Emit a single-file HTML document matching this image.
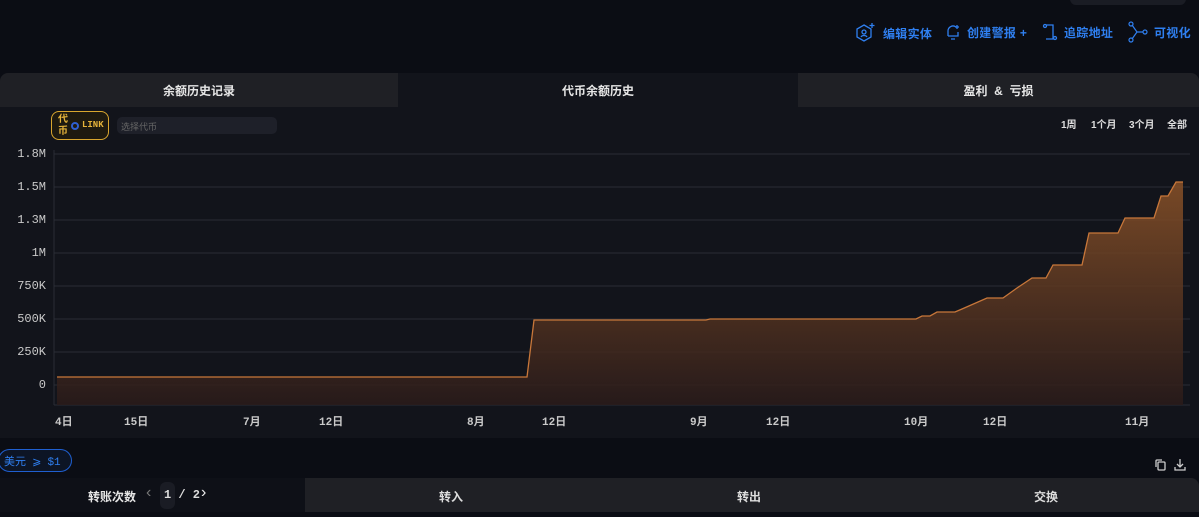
<!DOCTYPE html>
<html><head><meta charset="utf-8"><style>
*{margin:0;padding:0;box-sizing:border-box}
body{width:1199px;height:517px;background:#0b0d14;font-family:"Liberation Sans","Noto Sans CJK SC",sans-serif;overflow:hidden;position:relative;color:#ddd}
.abs{position:absolute}
.act{color:#2f7ff0;font-size:12px;font-weight:bold;display:flex;align-items:center;gap:6px;letter-spacing:0.3px}
.tab{position:absolute;top:73px;height:34px;font-size:12px;font-weight:bold;color:#e6e6e6;display:flex;align-items:center;justify-content:center}
.mono{font-family:"Liberation Mono","Noto Sans CJK SC",monospace}
.yl{position:absolute;right:1153px;font-size:12px;color:#c9c9c9;font-family:"Liberation Mono",monospace}
.xl{position:absolute;top:413px;font-size:11px;color:#c9c9c9;font-weight:bold;font-family:"Liberation Mono","Noto Sans CJK SC",monospace}
.rg{position:absolute;top:116px;font-size:10px;color:#ddd;font-weight:bold}
</style></head><body>
<div class="abs" style="left:1070px;top:-10px;width:116px;height:15px;border-radius:6px;background:#1a1c24"></div>
<div class="abs act" style="left:855px;top:22px">
<svg width="22" height="22" viewBox="0 0 22 22" fill="none" stroke="#2f7ff0" stroke-width="1.3"><path d="M9 3l7 4v8l-7 4-7-4V7z"/><circle cx="9" cy="10" r="2"/><path d="M6 15c1-2 5-2 6 0"/><path d="M17 1v5M14.5 3.5h5"/></svg>编辑实体</div>
<div class="abs act" style="left:945px;top:23px">
<svg width="16" height="18" viewBox="0 0 16 18" fill="none" stroke="#2f7ff0" stroke-width="1.3"><path d="M3 13V8a5 5 0 0 1 8-4M3 13h10v-4"/><path d="M6 16h4M12 2v4M10 4h4"/></svg>创建警报 +</div>
<div class="abs act" style="left:1042px;top:23px">
<svg width="16" height="18" viewBox="0 0 16 18" fill="none" stroke="#2f7ff0" stroke-width="1.3"><path d="M4 2h7v14H4"/><circle cx="3" cy="3" r="1.5"/><circle cx="13" cy="15" r="1.5"/></svg>追踪地址</div>
<div class="abs act" style="left:1128px;top:21px">
<svg width="20" height="22" viewBox="0 0 20 22" fill="none" stroke="#2f7ff0" stroke-width="1.2"><circle cx="3" cy="3" r="2"/><circle cx="3" cy="19" r="2"/><circle cx="17" cy="11" r="2"/><path d="M4 4l5 7-5 7M9 11h6"/></svg>可视化</div>

<div class="tab" style="left:0;width:398px;background:#1f2025;border-radius:8px 0 0 0">余额历史记录</div>
<div class="tab" style="left:398px;width:400px;background:#12141b">代币余额历史</div>
<div class="tab" style="left:798px;width:401px;background:#1f2025;border-radius:0 8px 0 0">盈利 &nbsp;&amp;&nbsp; 亏损</div>

<div class="abs" style="left:0;top:107px;width:1199px;height:331px;background:#12141b"></div>
<div class="abs" style="left:51px;top:111px;width:58px;height:29px;border:1.5px solid #d9a62e;border-radius:8px;background:#1e1a10;font-size:10px;color:#e5b33a;font-weight:bold">
<div class="abs" style="left:6px;top:2px;line-height:12px">代<br>币</div>
<div class="abs" style="left:19px;top:10px;width:8px;height:8px;border:2px solid #2f5fd0;border-radius:50%"></div>
<div class="abs mono" style="left:30px;top:8px;font-size:9px">LINK</div></div>
<div class="abs" style="left:117px;top:117px;width:160px;height:17px;border-radius:5px;background:#1e2029;font-size:9px;color:#666;padding:3px 4px">选择代币</div>
<div class="rg" style="left:1061px">1周</div>
<div class="rg" style="left:1091px">1个月</div>
<div class="rg" style="left:1129px">3个月</div>
<div class="rg" style="left:1167px">全部</div>

<div class="yl" style="top:147px">1.8M</div>
<div class="yl" style="top:180px">1.5M</div>
<div class="yl" style="top:213px">1.3M</div>
<div class="yl" style="top:246px">1M</div>
<div class="yl" style="top:279px">750K</div>
<div class="yl" style="top:312px">500K</div>
<div class="yl" style="top:345px">250K</div>
<div class="yl" style="top:378px">0</div>

<svg class="abs" style="left:0;top:0" width="1199" height="440">
<defs><linearGradient id="g" x1="0" y1="0" x2="0" y2="1"><stop offset="0" stop-color="#8a5228"/><stop offset="1" stop-color="#2a1b1a"/></linearGradient></defs>
<line x1="54" y1="150" x2="54" y2="405" stroke="#2a2d36"/>
<g stroke="#2a2d36" stroke-width="1">
<line x1="54" y1="154" x2="1190" y2="154"/><line x1="54" y1="187" x2="1190" y2="187"/><line x1="54" y1="220" x2="1190" y2="220"/><line x1="54" y1="253" x2="1190" y2="253"/><line x1="54" y1="286" x2="1190" y2="286"/><line x1="54" y1="319" x2="1190" y2="319"/><line x1="54" y1="352" x2="1190" y2="352"/><line x1="54" y1="385" x2="1190" y2="385"/><line x1="54" y1="405" x2="1190" y2="405"/></g>
<path d="M57 377H527L534 320H706L710 319H916L922 316H930L937 312H955L962 309L987 298H1003L1017 288L1032 278H1046L1053 265H1082L1089 233H1118L1125 218H1154L1161 196H1168L1176 182H1183V405H57Z" fill="url(#g)" fill-opacity="0.85"/>
<path d="M57 377H527L534 320H706L710 319H916L922 316H930L937 312H955L962 309L987 298H1003L1017 288L1032 278H1046L1053 265H1082L1089 233H1118L1125 218H1154L1161 196H1168L1176 182H1183" fill="none" stroke="#c8773a" stroke-width="1.3"/>
</svg>
<div class="xl" style="left:55px">4日</div>
<div class="xl" style="left:124px">15日</div>
<div class="xl" style="left:243px">7月</div>
<div class="xl" style="left:319px">12日</div>
<div class="xl" style="left:467px">8月</div>
<div class="xl" style="left:542px">12日</div>
<div class="xl" style="left:690px">9月</div>
<div class="xl" style="left:766px">12日</div>
<div class="xl" style="left:904px">10月</div>
<div class="xl" style="left:983px">12日</div>
<div class="xl" style="left:1125px">11月</div>

<div class="abs" style="left:-2px;top:449px;width:74px;height:23px;border:1.5px solid #1f5fd0;border-radius:12px;font-size:11px;color:#2f7ff0;padding:3px 5px;background:#0d1525">美元 &nbsp;⩾ &nbsp;<span class="mono">$1</span></div>
<svg class="abs" style="left:1154px;top:458px" width="36" height="14" viewBox="0 0 36 14" fill="none" stroke="#ccc" stroke-width="1.3"><rect x="4" y="4" width="7" height="8" rx="1"/><path d="M2 9V3a1 1 0 0 1 1-1h5"/><path d="M26 1v8M23 6l3 3 3-3M21 9v3h10V9"/></svg>

<div class="abs" style="left:0;top:478px;width:305px;height:34px;background:#0e1017"></div>
<div class="abs" style="left:305px;top:478px;width:894px;height:34px;background:#1f2025;border-radius:0 8px 0 0"></div>
<div class="abs" style="left:88px;top:488px;font-size:12px;font-weight:bold;color:#e6e6e6">转账次数</div>
<div class="abs" style="left:146px;top:484px;font-size:16px;color:#777">‹</div>
<div class="abs" style="left:160px;top:482px;width:15px;height:27px;border-radius:6px;background:#1a1c24"></div>
<div class="abs mono" style="left:164px;top:488px;font-size:12px;color:#ddd;font-weight:bold">1 / 2</div>
<div class="abs" style="left:201px;top:484px;font-size:16px;color:#eee">›</div>
<div class="abs" style="left:439px;top:488px;font-size:12px;font-weight:bold;color:#ddd">转入</div>
<div class="abs" style="left:737px;top:488px;font-size:12px;font-weight:bold;color:#ddd">转出</div>
<div class="abs" style="left:1034px;top:488px;font-size:12px;font-weight:bold;color:#ddd">交换</div>
</body></html>
